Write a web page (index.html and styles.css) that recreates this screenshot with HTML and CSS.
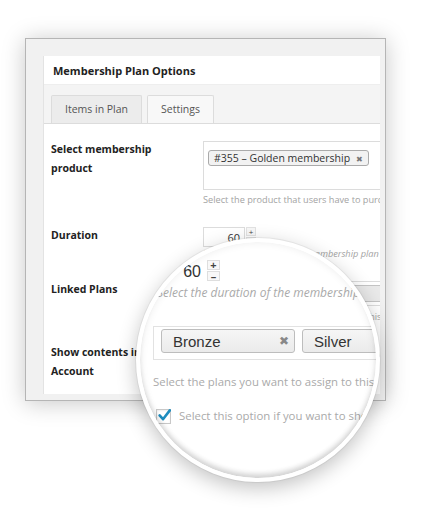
FILE: index.html
```html
<!DOCTYPE html>
<html>
<head>
<meta charset="utf-8">
<link rel="stylesheet" href="styles.css">
</head>
<body>
<div class="stage">
  <div class="window">
    <div class="postbox">
      <div class="pb-head">Membership Plan Options</div>
      <div class="tabs">
        <span class="tab">Items in Plan</span>
        <span class="tab tab-active">Settings</span>
      </div>
      <div class="pb-body">
        <div class="row">
          <div class="label">Select membership<br>product</div>
          <div class="field">
            <div class="sel-box sel-tall"><span class="tag">#355 – Golden membership <span class="tag-x">✖</span></span></div>
            <p class="desc">Select the product that users have to purchase to get this membership</p>
          </div>
        </div>
        <div class="row">
          <div class="label">Duration</div>
          <div class="field">
            <div class="num">
              <span class="num-input">60</span>
              <span class="spin"><span class="spin-b">+</span><span class="spin-b">–</span></span>
            </div>
            <p class="desc desc-i">Select the duration of the membership plan</p>
          </div>
        </div>
        <div class="row">
          <div class="label">Linked Plans</div>
          <div class="field">
            <div class="sel-box sel-multi"><span class="tag tag-sm">Bronze <span class="tag-x">✖</span></span><span class="tag tag-sm tag-wide">Silver <span class="tag-x">✖</span></span></div>
            <p class="desc desc-3">Select the plans you want to assign to this membership</p>
          </div>
        </div>
        <div class="row">
          <div class="label">Show contents in<br>Account</div>
          <div class="field">
            <div class="check-row"><span class="cb"></span><span class="desc">Select this option if you want to show contents</span></div>
          </div>
        </div>
      </div>
    </div>
  </div>

  <div class="lens">
    <div class="lens-in">
      <div class="l-num">
        <span class="l-input">60</span>
        <span class="l-spin"><span class="l-spin-b">+</span><span class="l-spin-b">–</span></span>
      </div>
      <p class="l-desc-i">Select the duration of the membership plan</p>
      <div class="l-box">
        <span class="l-tag">Bronze <span class="l-x">✖</span></span>
        <span class="l-tag">Silver</span>
      </div>
      <p class="l-desc">Select the plans you want to assign to this membership</p>
      <div class="l-check">
        <span class="l-cb"><svg width="15" height="15" viewBox="0 0 15 15"><path d="M2.6 7.4 L6 11.2 L12.8 2.4" fill="none" stroke="#1e8cbe" stroke-width="2.6" stroke-linecap="round" stroke-linejoin="round"/></svg></span>
        <span class="l-check-t">Select this option if you want to show contents</span>
      </div>
    </div>
  </div>
</div>
</body>
</html>
```

FILE: styles.css
```css
html, body {
  margin: 0;
  padding: 0;
  background: #fff;
}
.stage {
  position: relative;
  width: 422px;
  height: 518px;
  overflow: hidden;
  font-family: "Open Sans", "DejaVu Sans", sans-serif;
  padding-top: 38px;
  box-sizing: border-box;
}
.window {
  margin-left: 25px;
  width: 337px;
  height: 339px;
  border: 1px solid #b5b5b5;
  background: #f1f1f1;
  box-shadow: 0 2px 22px rgba(0,0,0,0.22);
  padding: 17px 5px 5px 17px;
  box-sizing: content-box;
  overflow: hidden;
}
.postbox {
  width: 337px;
  height: 338px;
  background: #fff;
  border-left: 1px solid #e3e3e3;
  box-sizing: border-box;
  overflow: hidden;
}
.pb-head {
  height: 29px;
  line-height: 29px;
  padding-left: 9px;
  font-size: 11px;
  font-weight: 700;
  color: #222;
  border-bottom: 1px solid #eee;
  box-sizing: border-box;
}
.tabs {
  height: 39px;
  background: #f4f4f4;
  border-bottom: 1px solid #dcdcdc;
  box-sizing: border-box;
  display: flex;
  align-items: flex-end;
  gap: 5px;
  padding-left: 7px;
}
.tab {
  height: 28px;
  line-height: 27px;
  font-size: 10.5px;
  color: #555;
  background: #ececec;
  border: 1px solid #dcdcdc;
  border-bottom: none;
  border-radius: 2px 2px 0 0;
  box-sizing: border-box;
  padding: 0 12px;
  width: 91px;
  text-align: center;
}
.tab-active {
  background: #f8f8f8;
  width: 67px;
  padding: 0;
}
.pb-body {
  width: 520px;
  padding-top: 17px;
}
.row {
  display: grid;
  grid-template-columns: 152px 1fr;
  padding-left: 7px;
  margin-bottom: 21px;
}
.label {
  font-size: 10.5px;
  font-weight: 700;
  line-height: 19px;
  color: #222;
  margin-top: -1.5px;
}
.field {
  min-width: 0;
}
.sel-box {
  border: 1px solid #dcdcdc;
  box-sizing: border-box;
  background: #fff;
}
.sel-tall {
  height: 49px;
  padding: 3px 4px;
}
.tag {
  display: inline-flex;
  align-items: center;
  height: 16px;
  padding: 0 5px;
  font-size: 10.5px;
  color: #333;
  background: #f2f2f2;
  border: 1px solid #aaa;
  border-radius: 3px;
  box-sizing: border-box;
  gap: 6px;
  white-space: nowrap;
}
.tag-x {
  font-size: 8px;
  color: #777;
}
.desc {
  margin: 3px 0 0;
  font-size: 9.2px;
  line-height: 13px;
  color: #a3a3a3;
  white-space: nowrap;
}
.desc-i {
  font-style: italic;
  margin-top: 0;
}
.desc-3 {
  margin-top: 4px;
}
.num {
  display: flex;
  align-items: flex-start;
}
.num-input {
  width: 42px;
  height: 20px;
  border: 1px solid #dcdcdc;
  box-sizing: border-box;
  text-align: right;
  padding-right: 4px;
  font-size: 11px;
  line-height: 19px;
  color: #333;
}
.spin {
  display: flex;
  flex-direction: column;
  margin-left: 1px;
}
.spin-b {
  width: 10px;
  height: 9px;
  border: 1px solid #e2e2e2;
  background: #f7f7f7;
  font-size: 8px;
  line-height: 8px;
  text-align: center;
  color: #444;
  box-sizing: border-box;
  margin-bottom: 1px;
}
.sel-multi {
  height: 25px;
  padding: 3px 4px;
  display: flex;
  gap: 4px;
}
.tag-sm {
  width: 86px;
  height: 17px;
  justify-content: space-between;
  background: #e9e9e9;
  border-color: #c4c4c4;
  flex: none;
}
.tag-wide {
  width: 110px;
}
.check-row {
  display: flex;
  align-items: center;
  gap: 6px;
  height: 19px;
}
.check-row .desc {
  margin: 0;
}
.cb {
  width: 11px;
  height: 11px;
  border: 1px solid #bbb;
}

/* magnifier lens overlay */
.lens {
  position: absolute;
  left: 136px;
  top: 238px;
  width: 244px;
  height: 244px;
  border-radius: 50%;
  border: 4px solid #fff;
  box-sizing: border-box;
  background: #fff;
  overflow: hidden;
  box-shadow: 0 0 0 1px rgba(0,0,0,0.05), 0 6px 20px rgba(0,0,0,0.24);
}
.lens::after {
  content: "";
  position: absolute;
  inset: 0;
  border-radius: 50%;
  box-shadow: inset 0 -5px 5px -1px rgba(0,0,0,0.14), inset 0 0 8px rgba(0,0,0,0.08);
  pointer-events: none;
}
.lens-in {
  padding: 18px 0 0 13px;
  width: 400px;
  font-family: "Open Sans", "DejaVu Sans", sans-serif;
}
.l-num {
  display: flex;
  align-items: flex-start;
}
.l-input {
  width: 52px;
  height: 21px;
  text-align: right;
  padding-right: 4px;
  box-sizing: border-box;
  font-family: "Liberation Sans", Arial, sans-serif;
  font-size: 16px;
  line-height: 23px;
  color: #333;
}
.l-spin {
  display: flex;
  flex-direction: column;
  margin-left: 2px;
  gap: 1px;
}
.l-spin-b {
  width: 13px;
  height: 10px;
  border: 1px solid #dedede;
  background: #f8f8f8;
  box-sizing: border-box;
  font-size: 11px;
  line-height: 8px;
  font-weight: 700;
  text-align: center;
  color: #444;
}
.l-desc-i {
  margin: 4px 0 0 4px;
  font-size: 12px;
  line-height: 16px;
  font-style: italic;
  color: #aaa;
  white-space: nowrap;
}
.l-box {
  margin-top: 25px;
  height: 34px;
  border: 1px solid #e2e2e2;
  box-sizing: border-box;
  padding: 2px 7px;
  display: flex;
  gap: 7px;
}
.l-tag {
  height: 24px;
  width: 134px;
  border: 1px solid #bdbdbd;
  border-radius: 3px;
  box-sizing: border-box;
  background: linear-gradient(#f6f6f6, #ebebeb);
  display: flex;
  align-items: center;
  justify-content: space-between;
  padding: 0 5px 0 11px;
  font-family: "Liberation Sans", Arial, sans-serif;
  font-size: 15px;
  color: #333;
  flex: none;
}
.l-x {
  font-size: 12px;
  color: #888;
  font-family: "DejaVu Sans", sans-serif;
}
.l-desc {
  margin: 13px 0 0;
  font-size: 11.4px;
  line-height: 18px;
  color: #aaa;
  white-space: nowrap;
}
.l-check {
  display: flex;
  align-items: center;
  margin: 16px 0 0 3px;
  gap: 8px;
}
.l-cb {
  width: 15px;
  height: 15px;
  border: 1px solid #c8c8c8;
  box-sizing: border-box;
  background: #fff;
  box-shadow: inset 0 1px 2px rgba(0,0,0,0.08);
  position: relative;
}
.l-cb svg {
  position: absolute;
  left: 0;
  top: -2px;
}
.l-check-t {
  font-size: 11.4px;
  line-height: 18px;
  color: #aaa;
  white-space: nowrap;
}
```
